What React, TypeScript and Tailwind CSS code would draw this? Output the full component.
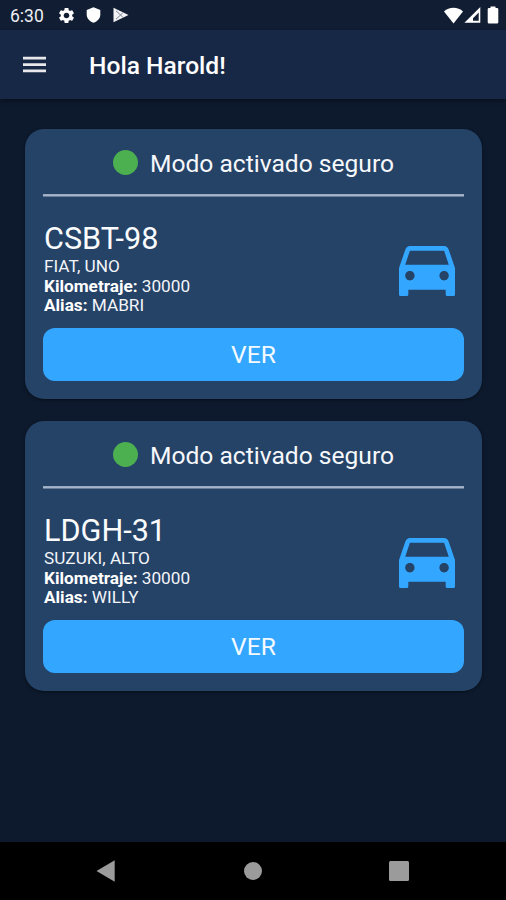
import React from "react";

type Vehicle = { plate: string; model: string; km: string; alias: string };

const vehicles: Vehicle[] = [
  { plate: "CSBT-98", model: "FIAT, UNO", km: "30000", alias: "MABRI" },
  { plate: "LDGH-31", model: "SUZUKI, ALTO", km: "30000", alias: "WILLY" },
];

function StatusBar() {
  return (
    <div className="flex h-[30px] items-center bg-[#111d33] pl-[10px] pr-[7px] text-white">
      <span className="w-[47px] pt-px text-[17.500px] leading-[30px] text-[#eceef2]">6:30</span>
      <svg className="h-[19px] w-[19px]" viewBox="0 0 24 24" fill="currentColor">
        <path d="M19.14 12.94c.04-.3.06-.61.06-.94 0-.32-.02-.64-.07-.94l2.03-1.58c.18-.14.23-.41.12-.61l-1.92-3.32c-.12-.22-.37-.29-.59-.22l-2.39.96c-.5-.38-1.03-.7-1.62-.94l-.36-2.54c-.04-.24-.24-.41-.48-.41h-3.84c-.24 0-.43.17-.47.41l-.36 2.54c-.59.24-1.13.57-1.62.94l-2.39-.96c-.22-.08-.47 0-.59.22L2.74 8.87c-.12.21-.08.47.12.61l2.03 1.58c-.05.3-.09.63-.09.94s.02.64.07.94l-2.03 1.58c-.18.14-.23.41-.12.61l1.92 3.32c.12.22.37.29.59.22l2.39-.96c.5.38 1.03.7 1.62.94l.36 2.54c.05.24.24.41.48.41h3.84c.24 0 .44-.17.47-.41l.36-2.54c.59-.24 1.13-.56 1.62-.94l2.39.96c.22.08.47 0 .59-.22l1.92-3.32c.12-.22.07-.47-.12-.61l-2.01-1.58zM12 15.6c-1.98 0-3.6-1.62-3.6-3.6s1.62-3.6 3.6-3.6 3.6 1.62 3.6 3.6-1.62 3.6-3.6 3.6z" />
      </svg>
      <svg className="ml-[10px] h-[16px] w-[15px]" viewBox="0 0 15 16" fill="currentColor">
        <path d="M7.500 0.300 14.300 3v4.500c0 3.800-2.800 7.100-6.800 8.200C3.500 14.600.7 11.300.7 7.500V3z" />
      </svg>
      <svg className="ml-[12px] h-[16px] w-[16px]" viewBox="0 0 16 16">
        <path d="M0.500 0.700 15.500 8 0.500 15.300z" fill="#f3f3f5" />
        <path d="M3 3.800 7.600 8 3 12.200M7.600 8 10 5.500M7.600 8 10 10.500" stroke="#7d8494" strokeWidth="1" fill="none" />
      </svg>
      <div className="ml-auto flex items-center">
        <svg className="h-[17px] w-[19px]" viewBox="0 0 19 17" fill="currentColor">
          <path d="M0 4.500C2.500 2.100 5.900.8 9.500.8S16.500 2.100 19 4.500L9.500 16.500z" />
        </svg>
        <svg className="ml-px h-[16px] w-[17px]" viewBox="0 0 17 16">
          <path fillRule="evenodd" d="M16.300 0V15.700H.4zM14.700 5.500 9 11.200V13.800H14.700z" fill="#fff" />
        </svg>
        <svg className="ml-[6px] h-[18px] w-[12px]" viewBox="0 0 12 18" fill="currentColor">
          <path d="M3.500.5h5V2H10q1.300 0 1.300 1.300v12.900q0 1.300-1.300 1.300H2q-1.300 0-1.300-1.300V3.300Q.7 2 2 2h1.500z" />
        </svg>
      </div>
    </div>
  );
}

function AppBar() {
  return (
    <header className="flex h-[69px] items-center bg-[#172847] pl-[23px] shadow-[0_2px_4px_rgba(0,0,0,0.4)]">
      <svg className="mr-[43px] h-[17px] w-[23px]" viewBox="0 0 23 17" fill="#e8e8ea">
        <path d="M0 .8h23v2.700H0zM0 7.200h23v2.700H0zM0 13.600h23v2.700H0z" />
      </svg>
      <h1 className="pt-[3px] text-[24.600px] font-medium leading-[30px] text-white">Hola Harold!</h1>
    </header>
  );
}

function VehicleCard({ plate, model, km, alias }: Vehicle) {
  return (
    <section className="flex h-[270px] flex-col rounded-[19px] bg-[#254267] px-[18px] shadow-[0_1px_3px_rgba(0,0,0,0.5)]">
      <div className="flex h-[65px] items-center justify-center gap-[12px] pt-px">
        <span className="h-[25px] w-[25px] rounded-full bg-[#4caf50]" />
        <span className="pt-[3px] text-[24.600px] leading-[30px] text-[#f6f8fb]">Modo activado seguro</span>
      </div>
      <svg className="h-[3px] w-full" viewBox="0 0 421 3" preserveAspectRatio="none">
        <rect y="0.100" width="421" height="2.400" fill="#a7b5ca" />
      </svg>
      <div className="flex h-[131px] justify-between pt-[24px] text-[#f3f5f9]">
        <div className="pl-px text-[17.200px] leading-[19.500px]">
          <h2 className="mb-px text-[30.600px] leading-[35px] text-[#fafbfd]">{plate}</h2>
          <p>{model}</p>
          <p><b className="font-bold text-white">Kilometraje:</b> {km}</p>
          <p><b className="font-bold text-white">Alias:</b> {alias}</p>
        </div>
        <svg className="mr-[9px] mt-[25px] h-[50px] w-[56px]" viewBox="3 5 18 16" preserveAspectRatio="none" fill="#33a7ff">
          <path d="M18.920 6.010C18.720 5.420 18.160 5 17.500 5h-11c-.66 0-1.210.42-1.420 1.010L3 12v8.500q0 .5.500.5h2q.5 0 .5-.5V19h12v1.500q0 .5.500.5h2q.5 0 .5-.5V12l-2.080-5.990zM6.500 16c-.83 0-1.500-.67-1.500-1.500S5.670 13 6.500 13s1.500.67 1.500 1.500S7.330 16 6.500 16zm11 0c-.83 0-1.500-.67-1.500-1.500s.67-1.500 1.500-1.500 1.500.67 1.500 1.500-.67 1.500-1.500 1.500zM5 11l1.500-4.500h11L19 11H5z" />
        </svg>
      </div>
      <button className="h-[53px] rounded-[12px] bg-[#33a7ff] text-[24.600px] leading-[53px] text-[#f5faff]">VER</button>
    </section>
  );
}

function NavBar() {
  return (
    <nav className="flex h-[58px] items-center justify-between bg-black pl-[96px] pr-[97px]">
      <svg className="h-[22px] w-[19px]" viewBox="0 0 19 22" fill="#9b9b9b"><path d="M18.700.3V21.700L.5 11z" /></svg>
      <span className="ml-[2px] h-[18px] w-[18px] rounded-full bg-[#9b9b9b]" />
      <span className="h-[20px] w-[20px] rounded-[1.500px] bg-[#9b9b9b]" />
    </nav>
  );
}

export default function App() {
  return (
    <div className="flex h-[900px] w-[506px] flex-col overflow-hidden bg-[#0d1a2d] font-['Roboto','Noto_Sans',sans-serif]">
      <StatusBar />
      <AppBar />
      <main className="flex flex-1 flex-col gap-[22px] pl-[25px] pr-[24px] pt-[30px]">
        {vehicles.map((v) => (
          <VehicleCard key={v.plate} {...v} />
        ))}
      </main>
      <NavBar />
    </div>
  );
}
